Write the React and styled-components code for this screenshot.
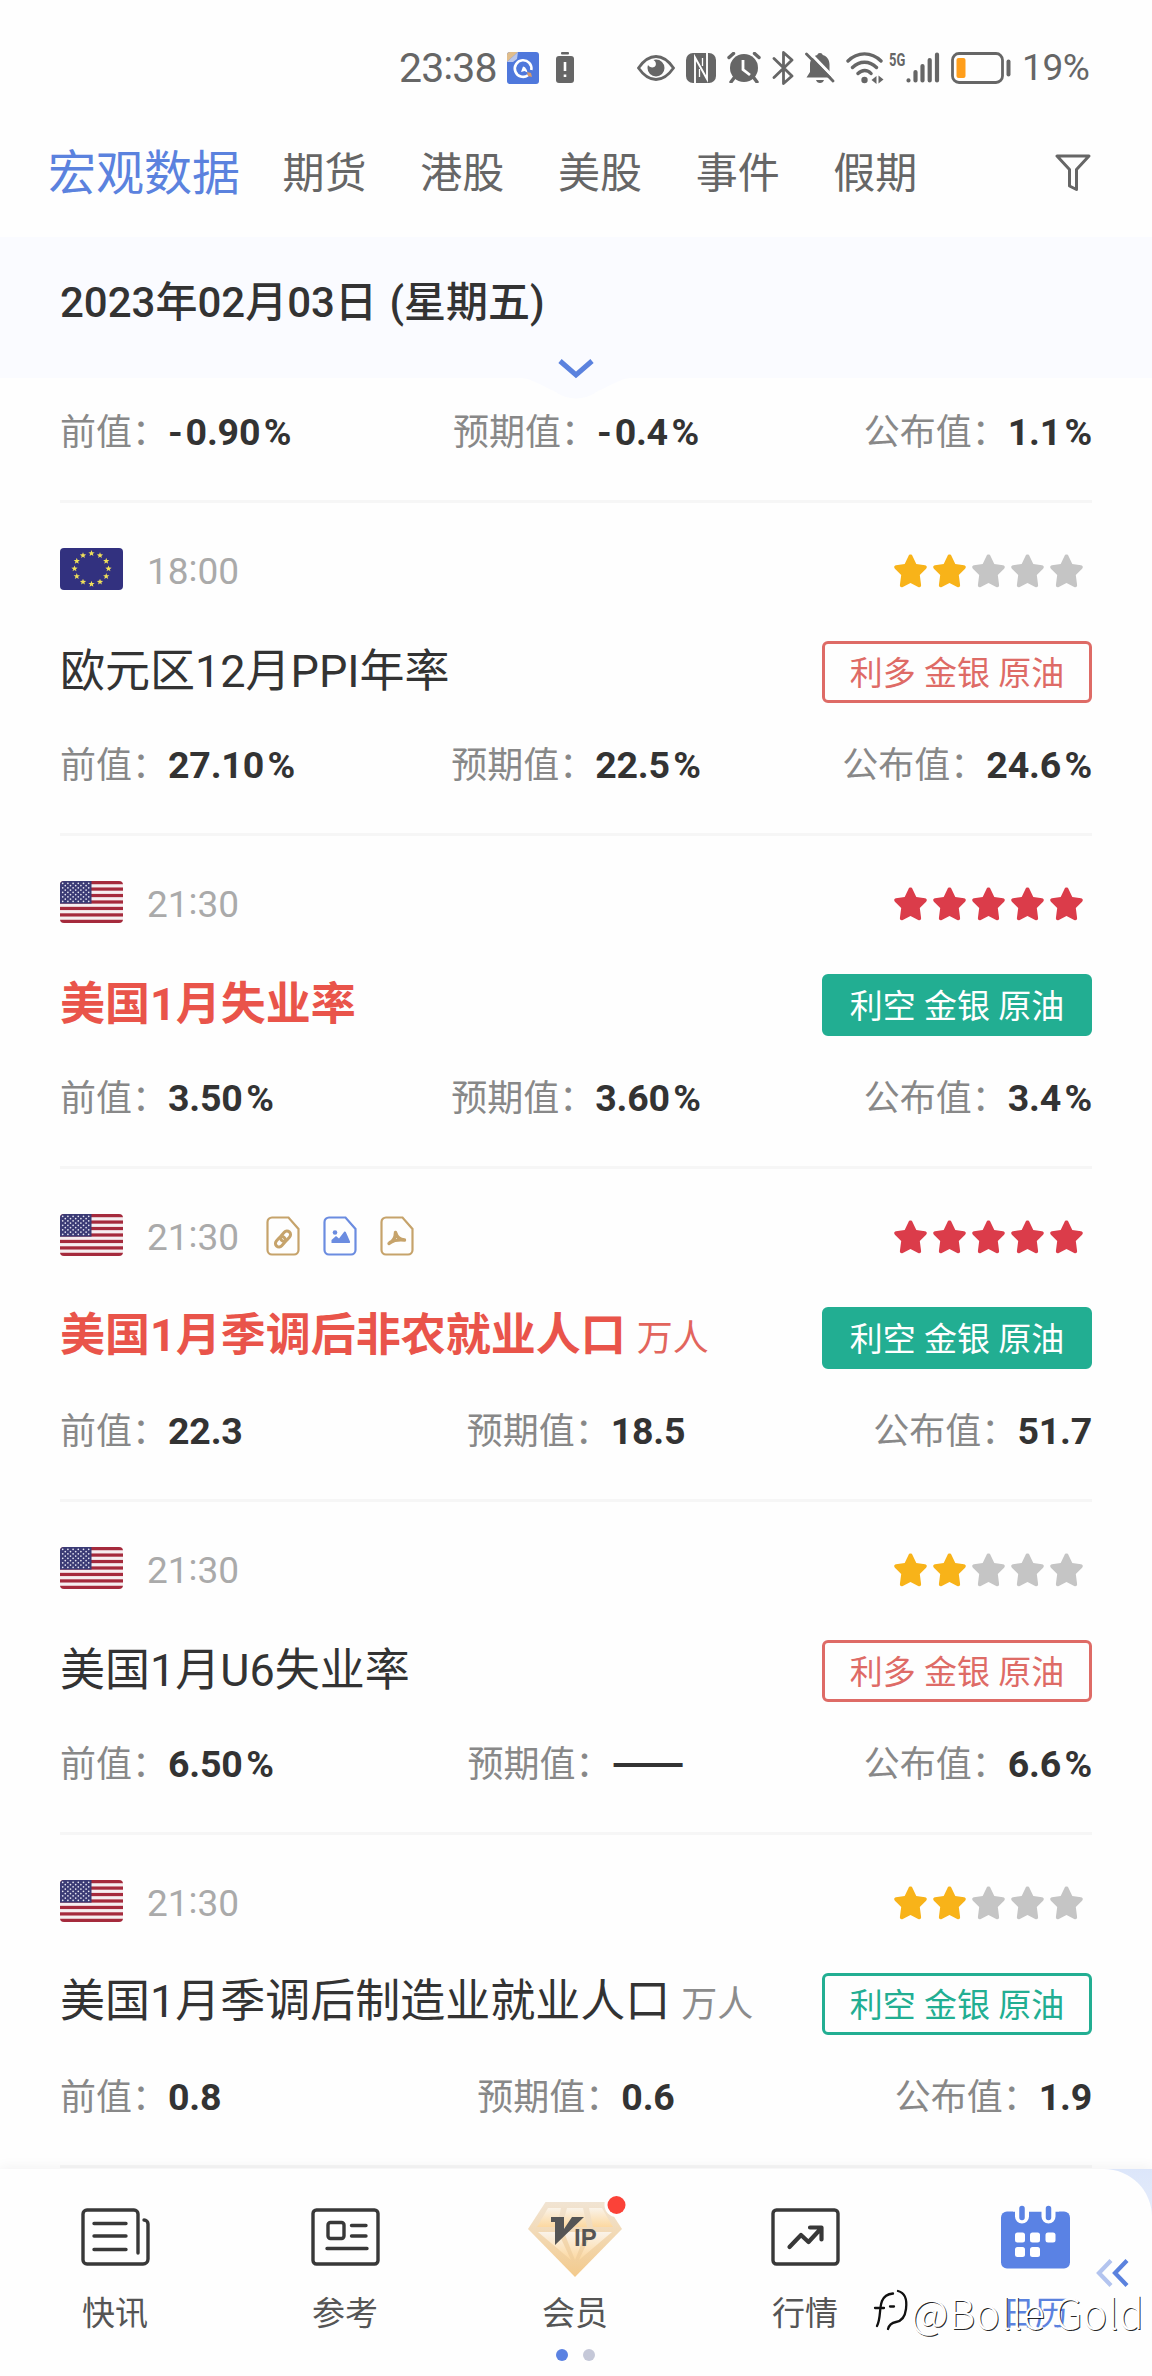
import React from "react";
import styled, { createGlobalStyle } from "styled-components";

const GlobalStyle = createGlobalStyle`
 body {
   margin: 0;
   background-color: #fefefe;
 }
 * {
   box-sizing: border-box;
 }
`;

const Page = styled.div`
 width: 1152px;
 height: 2376px;
 overflow: hidden;
 display: flex;
 flex-direction: column;
 background-color: #fefefe;
 color: #333333;
 font-family: Roboto, "Noto Sans CJK SC", sans-serif;
 svg {
   display: block;
   flex: none;
 }
`;

const StatusBar = styled.div`
 height: 135px;
 padding: 0 63px 0 399px;
 display: flex;
 align-items: center;
 justify-content: space-between;
 color: #666666;
`;

const StatusGroup = styled.div`
 display: flex;
 align-items: center;
`;

const Clock = styled.div`
 width: 108px;
 font-size: 41px;
 line-height: 60px;
 letter-spacing: -0.9px;
`;

const BatteryText = styled.div`
 width: 67px;
 font-size: 37px;
 line-height: 60px;
 letter-spacing: -0.4px;
 white-space: nowrap;
`;

const Colon = styled.span`
 vertical-align: 3px;
 line-height: 1;
`;

const Tabs = styled.div`
 height: 102px;
 padding: 0 61px 0 48px;
 display: flex;
 align-items: center;
 padding-bottom: 24px;
`;

const Tab = styled.div`
 font-size: ${props => (props.$active ? "48px" : "42px")};
 line-height: 60px;
 color: ${props => (props.$active ? "#5b82de" : "#666666")};
 margin-right: ${props => (props.$active ? "42.5px" : "53.7px")};
`;

const FilterButton = styled.div`
 margin-left: auto;
 padding-bottom: 2px;
`;

const DateBar = styled.div`
 position: relative;
 height: 141px;
 flex: none;
 padding: 0 60px;
 background-color: #fafbff;
 font-size: 42px;
 font-weight: 500;
 line-height: 131px;
 word-spacing: 2px;
`;

const Expander = styled.div`
 position: absolute;
 left: 522px;
 top: 118px;
`;

const List = styled.div`
 height: 1791px;
 flex: none;
 padding: 0 60px;
`;

const Card = styled.div`
 height: ${props => (props.$cut ? "125px" : "333px")};
 padding-top: ${props => (props.$cut ? "28px" : "45px")};
 border-bottom: 3px solid #f6f6f6;
`;

const CardTop = styled.div`
 height: 42px;
 display: flex;
 align-items: center;
`;

const Time = styled.div`
 margin: 4px 0 0 24px;
 font-size: 37px;
 line-height: 42px;
 color: #aaaaaa;
 width: 94px;
 white-space: nowrap;
`;

const Files = styled.div`
 display: flex;
 gap: 23px;
 margin-left: 25px;
 padding-top: 2px;
`;

const Stars = styled.div`
 display: flex;
 gap: 6px;
 margin: 3px 9px 0 auto;
`;

const CardTitle = styled.div`
 margin-top: 51px;
 height: 62px;
 display: flex;
 align-items: center;
 justify-content: space-between;
`;

const Name = styled.div`
 font-size: 45px;
 line-height: 60px;
 padding-bottom: 1px;
 font-weight: ${props => (props.$hot ? 700 : 400)};
 color: ${props => (props.$hot ? "#e9544a" : "#333333")};
`;

const Unit = styled.span`
 margin-left: 11px;
 font-size: 36px;
 font-weight: 400;
 color: ${props => (props.$hot ? "#e2655d" : "#8c8c8c")};
`;

const Badge = styled.div`
 width: 270px;
 height: 62px;
 padding-top: 2px;
 border-radius: 6px;
 border: 3px solid ${props => props.$color};
 background-color: ${props => (props.$filled ? props.$color : "transparent")};
 color: ${props => (props.$filled ? "#ffffff" : props.$color)};
 font-size: 33px;
 line-height: 56px;
 text-align: center;
`;

const Values = styled.div`
 margin-top: ${props => (props.$cut ? 0 : "36px")};
 display: grid;
 grid-template-columns: 1fr auto 1fr;
`;

const Value = styled.div`
 font-size: 36px;
 line-height: 54px;
 color: #888888;
 white-space: nowrap;
 text-align: ${props => props.$align};
`;

const Figure = styled.b`
 font-size: 37.5px;
 font-weight: 700;
 line-height: 1;
 letter-spacing: -0.2px;
 color: #333333;
`;

const Minus = styled.span`
 margin-right: 3px;
`;

const Percent = styled.span`
 margin-left: 3.5px;
`;

const NoFigure = styled.span`
 font-family: "Noto Sans CJK SC", sans-serif;
 font-size: 43px;
 font-weight: 700;
 line-height: 0;
 color: #333333;
`;

const BottomArea = styled.div`
 position: relative;
 flex: 1;
 background: linear-gradient(#dce6fa, #fefefe 175px);
 box-shadow: 0 -2px 12px rgba(0, 0, 0, 0.05);
`;

const NavBar = styled.div`
 height: 100%;
 padding-right: 2px;
 display: grid;
 grid-template-columns: repeat(5, 1fr);
 background-color: #fefefe;
 border-radius: 0 48px 48px 0;
`;

const NavItem = styled.div`
 display: flex;
 flex-direction: column;
 align-items: center;
 padding-top: 28px;
 font-size: 33px;
 line-height: 48px;
 color: ${props => (props.$active ? "#5b82de" : "#555555")};
`;

const NavIcon = styled.div`
 height: 93px;
`;

const PageDots = styled.div`
 position: absolute;
 left: 556px;
 top: 180px;
 display: flex;
 gap: 15px;
`;

const Dot = styled.div`
 width: 12px;
 height: 12px;
 border-radius: 50%;
 background-color: ${props => (props.$on ? "#5b82e2" : "#c5c8d8")};
`;

const Collapse = styled.div`
 position: absolute;
 left: 1095px;
 top: 89px;
`;

const Watermark = styled.div`
 position: absolute;
 left: 873px;
 top: 115px;
 display: flex;
 align-items: center;
 color: #ffffff;
 font-family: "Noto Sans CJK SC", sans-serif;
 font-size: 41px;
 letter-spacing: 0.4px;
 line-height: 54px;
 font-weight: 300;
 white-space: nowrap;
 text-shadow: 1px 1px 0.5px rgba(0, 0, 0, 0.85);
`;

const FlagBox = styled.svg`
 border-radius: 4px;
`;

const starPath = "M16.5 0.5c.9 0 1.6.5 2 1.4l3.8 8.1 8.7 1.2c1.9.3 2.4 2.2 1.1 3.5l-6.3 6.3 1.3 10c.2 1.9-1.3 2.8-2.9 2l-7.7-4-7.7 4c-1.6.8-3.1-.1-2.9-2l1.3-10L.9 14.7c-1.3-1.3-.8-3.2 1.1-3.5l8.7-1.2 3.8-8.1c.4-.9 1.1-1.4 2-1.4z";

const Star = ({ color }) => (
  <svg width="33" height="34" viewBox="0 0 33 34">
    <path d={starPath} fill={color} />
  </svg>
);

const miniStar = (cx, cy, r) => {
  const pts = [];
  for (let i = 0; i < 10; i++) {
    const a = (Math.PI / 5) * i - Math.PI / 2;
    const d = i % 2 ? r * 0.42 : r;
    pts.push(`${(cx + d * Math.cos(a)).toFixed(2)},${(cy + d * Math.sin(a)).toFixed(2)}`);
  }
  return pts.join(" ");
};

const EuFlag = () => (
  <FlagBox width="63" height="42" viewBox="0 0 63 42">
    <rect width="63" height="42" fill="#32317f" />
    {[...Array(12)].map((_, i) => {
      const a = (Math.PI / 6) * i;
      return (
        <polygon
          key={i}
          points={miniStar(31.5 + 17 * Math.sin(a), 20.7 - 15.3 * Math.cos(a), 3.3)}
          fill="#f0e05a"
        />
      );
    })}
  </FlagBox>
);

const UsFlag = () => (
  <FlagBox width="63" height="42" viewBox="0 0 63 42">
    <rect width="63" height="42" fill="#f6eef0" />
    {[0, 1, 2, 3, 4, 5, 6].map(i => (
      <rect key={i} y={i * 6.46} width="63" height="3.23" fill="#a52a3c" />
    ))}
    <rect width="31.5" height="22.6" fill="#3b3b75" />
    {[0, 1, 2, 3, 4, 5, 6, 7, 8].map(r =>
      [...Array(r % 2 ? 5 : 6)].map((_, c) => (
        <circle key={`${r}-${c}`} cx={2.7 + c * 5.2 + (r % 2 ? 2.6 : 0)} cy={2.3 + r * 2.25} r="0.85" fill="#e6e6f2" />
      ))
    )}
  </FlagBox>
);

const FileIcon = ({ color, children }) => (
  <svg width="34" height="40" viewBox="0 0 34 40" fill="none" stroke={color} strokeWidth="2.2">
    <path d="M6 1.5H22.5L32.5 13V34a4.5 4.5 0 0 1-4.5 4.5H6A4.5 4.5 0 0 1 1.5 34V6A4.5 4.5 0 0 1 6 1.5z" />
    {children}
  </svg>
);

const LinkFile = () => (
  <FileIcon color="#c6a36b">
    <g transform="rotate(-48 17 23)" strokeWidth="3">
      <rect x="7.5" y="19.4" width="11.5" height="7.2" rx="3.6" />
      <rect x="15" y="19.4" width="11.5" height="7.2" rx="3.6" />
    </g>
  </FileIcon>
);

const ImageFile = () => (
  <FileIcon color="#6b8ce0">
    <g fill="#6b8ce0" stroke="none">
      <circle cx="12" cy="16.5" r="2.3" />
      <path d="M8.5 27v-3l4.5-4 3 2.5 5-6.5c.7-.8 1.3-.6 1.8.1L27 25.500c.3.8 0 1.5-1 1.5z" />
    </g>
  </FileIcon>
);

const PdfFile = () => (
  <FileIcon color="#c6a36b">
    <path d="M15.5 16.5c1 3.5 4 7 9 7.5M15.5 16.5c0 4.5-2.5 9-6.5 11M10 26.5c4-2.5 9.5-3 14.5-2.5" strokeWidth="3.4" strokeLinecap="round" />
  </FileIcon>
);

const files = [LinkFile, ImageFile, PdfFile];

const AppBadge = () => (
  <svg width="32" height="32" viewBox="0 0 32 32">
    <rect width="32" height="32" rx="3" fill="#4f78dc" />
    <path d="M0 10V3a3 3 0 0 1 3-3h8z" fill="#e0bd8c" />
    <path d="M0 10 11 0l-1 7-4 3z" fill="#b8c6ec" />
    <path d="M21 23.3A8.3 8.3 0 1 1 24.3 18" fill="none" stroke="#fff" strokeWidth="2.6" />
    <path d="M16 14.5c2 0 4 3 4.5 6l-3-1.5-3.5 1z" fill="#fff" />
    <path d="M20 20l4 1 1 4-4-1z" fill="#d99a6a" />
  </svg>
);

const BatteryAlert = () => (
  <svg width="18" height="31" viewBox="0 0 18 31">
    <rect x="5" width="8" height="2.5" rx="1" fill="#666" />
    <rect y="4" width="18" height="27" rx="3" fill="#666" />
    <path d="M9 10v9M9 22.5v2.5" stroke="#fff" strokeWidth="2.6" />
  </svg>
);

const Eye = () => (
  <svg width="38" height="26" viewBox="0 0 38 26">
    <path d="M1.5 13C7 5 13 1.5 19 1.5S31 5 36.5 13C31 21 25 24.5 19 24.5S7 21 1.5 13z" fill="none" stroke="#666" strokeWidth="2.8" />
    <path d="M19 4.5A8.5 8.5 0 1 1 10.5 13c0-1 .2-2 .5-3 1.5 2.8 6 3.5 7.5.8.9-2 .5-4.5-2-5.8.8-.3 1.6-.5 2.5-.5z" fill="#666" />
  </svg>
);

const Nfc = () => (
  <svg width="30" height="30" viewBox="0 0 30 30">
    <rect width="30" height="30" rx="7" fill="#666" />
    <path d="M9 30V4.5L21 26V0" fill="none" stroke="#fff" strokeWidth="1.9" />
    <path d="M13.5 24V16M16.500 5v8" fill="none" stroke="#fff" strokeWidth="1.3" />
  </svg>
);

const Alarm = () => (
  <svg width="34" height="31" viewBox="0 0 34 31">
    <circle cx="17" cy="16" r="14" fill="#666" />
    <path d="M2 5.5 6.5 1.5M32 5.5 27.5 1.5M7 26l-3 4M27 26l3 4" stroke="#666" strokeWidth="3.4" strokeLinecap="round" />
    <path d="M16 8v9.5l7 5.5" fill="none" stroke="#fff" strokeWidth="2.8" />
  </svg>
);

const Bluetooth = () => (
  <svg width="22" height="34" viewBox="0 0 22 34" fill="none" stroke="#666" strokeWidth="2.8" strokeLinejoin="round" strokeLinecap="round">
    <path d="M2 7.5 20 25l-8.5 7.5v-31L20 9 2 26.5" />
  </svg>
);

const BellOff = () => (
  <svg width="30" height="32" viewBox="0 0 30 32">
    <path d="M15 1c1.5 0 2.5.8 2.7 2 4.3 1 6.8 5 6.8 9.5V20l3 5.5h-26L5 20v-7.5C5 8 8 4 12.3 3c.2-1.2 1.2-2 2.7-2z" fill="#666" />
    <path d="M11 28h8c-.6 2-2 3-4 3s-3.4-1-4-3z" fill="#666" />
    <path d="M4 0l27 28" stroke="#fff" strokeWidth="3" />
    <path d="M1.5 2 28 29" stroke="#666" strokeWidth="2.8" strokeLinecap="round" />
  </svg>
);

const Wifi = () => (
  <svg width="38" height="32" viewBox="0 0 38 32" fill="none" stroke="#666" strokeWidth="3.4">
    <path d="M2 9C11.5-.5 25.5-.5 35 9M6.5 15.5c7-7 17-7 24 0M12 21.5c4-4 9.5-4 13 0" strokeLinecap="round" />
    <circle cx="18.5" cy="28" r="3.2" fill="#666" stroke="none" />
    <path d="M25.5 28l5-4v8zM37.5 27.5l-5-4v8z" fill="#666" stroke="none" />
  </svg>
);

const NetLabel = styled.div`
 margin-left: 5px;
 font-size: 18.5px;
 font-weight: 700;
 line-height: 20px;
 width: 17px;
 height: 36px;
 transform: scaleX(0.7);
 transform-origin: left;
`;

const Signal = () => (
  <svg width="34" height="31" viewBox="0 0 34 31" stroke="#666" strokeWidth="4.2" strokeLinecap="round">
    <path d="M2.5 28.4v.1M9.5 20v8.500M16.5 14v14.500M23.700 8v20.500M31 2.500v26" />
  </svg>
);

const Battery = () => (
  <svg width="60" height="32" viewBox="0 0 60 32">
    <rect x="1.5" y="1.5" width="50" height="29" rx="6.5" fill="none" stroke="#666" strokeWidth="2.8" />
    <rect x="5.5" y="6" width="9" height="20" rx="2" fill="#ff9e1b" />
    <path d="M57.5 9.5v13" stroke="#666" strokeWidth="4" strokeLinecap="round" />
  </svg>
);

const StatusIcons = styled.div`
 display: flex;
 align-items: center;
 gap: ${props => props.$gap || "11px"};
`;

const Filter = () => (
  <svg width="36" height="38" viewBox="0 0 36 38" fill="none" stroke="#666" strokeWidth="3" strokeLinejoin="round">
    <path d="M2 2h32L21.5 15.5v20l-7-3.5V15.5z" />
  </svg>
);

const NewsIcon = () => (
  <svg width="69" height="90" viewBox="0 0 69 90" fill="none" stroke="#383838" strokeWidth="3.4" strokeLinecap="round">
    <path d="M57 56V17a4 4 0 0 0-4-4H6a4 4 0 0 0-4 4v46a4 4 0 0 0 4 4h56a5 5 0 0 0 5-5V27a4 4 0 0 0-4-4" />
    <path d="M13 26.5h32M13 39h32M13 52.5h32" />
  </svg>
);

const RefIcon = () => (
  <svg width="69" height="90" viewBox="0 0 69 90" fill="none" stroke="#383838" strokeWidth="3.4" strokeLinecap="round">
    <rect x="2" y="13" width="65" height="54" rx="3.5" />
    <rect x="17" y="25.5" width="16" height="16" rx="2.5" />
    <path d="M40.5 28.5h14.5M40.5 39h14.5M16 51.5h40" />
  </svg>
);

const MarketIcon = () => (
  <svg width="69" height="90" viewBox="0 0 69 90" fill="none" stroke="#383838" strokeWidth="3.4">
    <rect x="2" y="13" width="65" height="54" rx="3.5" />
    <path d="M18.5 50 30 38l7.5 7L50 31.5M39 30.5h11.5v12" strokeWidth="4.2" strokeLinecap="round" strokeLinejoin="round" />
  </svg>
);

const GemSvg = styled.svg`
 overflow: visible;
`;

const VipText = styled.text`
 font-family: "Liberation Sans", sans-serif;
 font-weight: 700;
 fill: #555555;
`;

const VipIcon = () => (
  <GemSvg width="94" height="90" viewBox="2 0 94 90">
    <defs>
      <linearGradient id="gem" x1="0" y1="0" x2="0" y2="1">
        <stop offset="0" stopColor="#f1e4d3" />
        <stop offset="1" stopColor="#f3ca8c" />
      </linearGradient>
      <linearGradient id="face" x1="0" y1="0" x2="0" y2="1">
        <stop offset="0" stopColor="#faf3e9" />
        <stop offset="1" stopColor="#fcd8a0" />
      </linearGradient>
    </defs>
    <path d="M19.5 5h59L96 32 49 80 2 32z" fill="url(#gem)" />
    <g fill="url(#face)">
      <path d="M22 11h13l-4 19H11z" />
      <path d="M41 11h16l4 19H36z" />
      <path d="M63 11h13l11 19H67z" />
      <path d="M12 35h20l13 28z" />
      <path d="M38 35h22L49 63z" />
      <path d="M66 35h20L53 63z" />
    </g>
    <path d="M25 20h13v12l8-12h12L29 48V25h-4z" fill="#555" />
    <VipText x="48" y="48.5" fontSize="24">IP</VipText>
    <circle cx="90.5" cy="8" r="12" fill="#fefefe" />
    <circle cx="90.5" cy="8" r="9" fill="#fb4238" />
  </GemSvg>
);

const CalendarIcon = () => (
  <svg width="69" height="90" viewBox="0 0 69 90">
    <rect y="14.5" width="69" height="57" rx="6" fill="#5a82e4" />
    <g strokeLinecap="round">
      <path d="M21 11v8.5M47.5 11v8.5" stroke="#fff" strokeWidth="14" />
      <path d="M12 11h46" stroke="#fefefe" strokeWidth="7" strokeLinecap="butt" />
      <path d="M21 11.5v9M47.5 11.5v9" stroke="#5a82e4" strokeWidth="5.5" />
    </g>
    <g fill="#fff">
      <rect x="14" y="35.5" width="10" height="10" rx="2.5" />
      <rect x="29" y="35.5" width="10" height="10" rx="2.5" />
      <rect x="44.5" y="35.5" width="10" height="10" rx="2.5" />
      <rect x="14" y="50" width="10" height="10" rx="2.5" />
      <rect x="29" y="50" width="10" height="10" rx="2.5" />
    </g>
  </svg>
);

const MarkLogo = () => (
  <svg width="38" height="46" viewBox="0 0 38 46" fill="none" strokeLinecap="round">
    <path d="M4 38c4-8 2-17 5-25C11 8 15 6 20 5.500M2 20h9M17 18.500h4M25 3c8 2 9 10 8 18-1 8-4 12-10 13-5 1-7 3-8 7" stroke="#111" strokeWidth="2.3" />
  </svg>
);

const tabs = ["宏观数据", "期货", "港股", "美股", "事件", "假期"];

const RED = "#de6b66";
const GREEN = "#22ae92";

const cards = [
  { flag: EuFlag, time: "18:00", stars: 2, name: "欧元区12月PPI年率", badge: "利多 金银 原油", color: RED, values: ["27.10%", "22.5%", "24.6%"] },
  { flag: UsFlag, time: "21:30", stars: 5, name: "美国1月失业率", badge: "利空 金银 原油", color: GREEN, values: ["3.50%", "3.60%", "3.4%"] },
  { flag: UsFlag, time: "21:30", stars: 5, name: "美国1月季调后非农就业人口", unit: "万人", files: true, badge: "利空 金银 原油", color: GREEN, values: ["22.3", "18.5", "51.7"] },
  { flag: UsFlag, time: "21:30", stars: 2, name: "美国1月U6失业率", badge: "利多 金银 原油", color: RED, values: ["6.50%", "——", "6.6%"] },
  { flag: UsFlag, time: "21:30", stars: 2, name: "美国1月季调后制造业就业人口", unit: "万人", badge: "利空 金银 原油", color: GREEN, values: ["0.8", "0.6", "1.9"] }
];

const navItems = [
  { label: "快讯", icon: NewsIcon },
  { label: "参考", icon: RefIcon },
  { label: "会员", icon: VipIcon },
  { label: "行情", icon: MarketIcon },
  { label: "日历", icon: CalendarIcon, active: true }
];

const ClockText = ({ value }) => {
  const [hours, minutes] = value.split(":");
  return <>{hours}<Colon>:</Colon>{minutes}</>;
};

const labels = ["前值：", "预期值：", "公布值："];
const aligns = ["left", "center", "right"];

const FigureText = ({ value }) => {
  if (value === "——") return <NoFigure>{value}</NoFigure>;
  return (
    <Figure>
      {value[0] === "-" && <Minus>-</Minus>}
      {value.replace(/[-%]/g, "")}
      {value.endsWith("%") && <Percent>%</Percent>}
    </Figure>
  );
};

const ValueRow = ({ values, cut }) => (
  <Values $cut={cut}>
    {values.map((value, i) => (
      <Value key={i} $align={aligns[i]}>
        {labels[i]}
        <FigureText value={value} />
      </Value>
    ))}
  </Values>
);

const EventCard = ({ card }) => {
  const hot = card.stars === 5;
  const Flag = card.flag;
  return (
    <Card>
      <CardTop>
        <Flag />
        <Time><ClockText value={card.time} /></Time>
        {card.files && (
          <Files>
            {files.map((File, i) => <File key={i} />)}
          </Files>
        )}
        <Stars>
          {[0, 1, 2, 3, 4].map(i => (
            <Star key={i} color={i >= card.stars ? "#c5c5c5" : hot ? "#db3c4a" : "#f8b319"} />
          ))}
        </Stars>
      </CardTop>
      <CardTitle>
        <Name $hot={hot}>
          {card.name}
          {card.unit && <Unit $hot={hot}>{card.unit}</Unit>}
        </Name>
        <Badge $color={card.color} $filled={hot}>{card.badge}</Badge>
      </CardTitle>
      <ValueRow values={card.values} />
    </Card>
  );
};

class App extends React.Component {
  render() {
    return (
      <Page>
        <GlobalStyle />
        <StatusBar>
          <StatusGroup>
            <Clock><ClockText value="23:38" /></Clock>
            <StatusIcons $gap="17px">
              <AppBadge />
              <BatteryAlert />
            </StatusIcons>
          </StatusGroup>
          <StatusGroup>
            <StatusIcons>
              <Eye />
              <Nfc />
              <Alarm />
              <Bluetooth />
              <BellOff />
              <Wifi />
            </StatusIcons>
            <NetLabel>5G</NetLabel>
            <StatusIcons>
              <Signal />
              <Battery />
              <BatteryText>19%</BatteryText>
            </StatusIcons>
          </StatusGroup>
        </StatusBar>
        <Tabs>
          {tabs.map((tab, i) => <Tab key={tab} $active={i === 0}>{tab}</Tab>)}
          <FilterButton><Filter /></FilterButton>
        </Tabs>
        <DateBar>
          2023年02月03日 (星期五)
          <Expander>
            <svg width="108" height="46" viewBox="0 0 108 46">
              <path d="M0 23h108C98 24 90 30 76 36c-14 10-30 10-44 0C18 30 10 24 0 23z" fill="#fafbff" />
              <path d="M38 6l16 14L70 6" fill="none" stroke="#5b82de" strokeWidth="5" />
            </svg>
          </Expander>
        </DateBar>
        <List>
          <Card $cut>
            <ValueRow cut values={["-0.90%", "-0.4%", "1.1%"]} />
          </Card>
          {cards.map((card, i) => <EventCard key={i} card={card} />)}
        </List>
        <BottomArea>
          <NavBar>
            {navItems.map(item => {
              const Icon = item.icon;
              return (
                <NavItem key={item.label} $active={item.active}>
                  <NavIcon><Icon /></NavIcon>
                  {item.label}
                </NavItem>
              );
            })}
          </NavBar>
          <PageDots>
            <Dot $on />
            <Dot />
          </PageDots>
          <Collapse>
            <svg width="36" height="30" viewBox="0 0 36 30" fill="none" strokeWidth="4.2">
              <path d="M16 2.5 4 15l12 12.5" stroke="#b3c4ef" />
              <path d="M32 2.5 20 15l12 12.5" stroke="#5b82de" />
            </svg>
          </Collapse>
          <Watermark>
            <MarkLogo />
            @Bolle Gold
          </Watermark>
        </BottomArea>
      </Page>
    );
  }
}

export default App;
